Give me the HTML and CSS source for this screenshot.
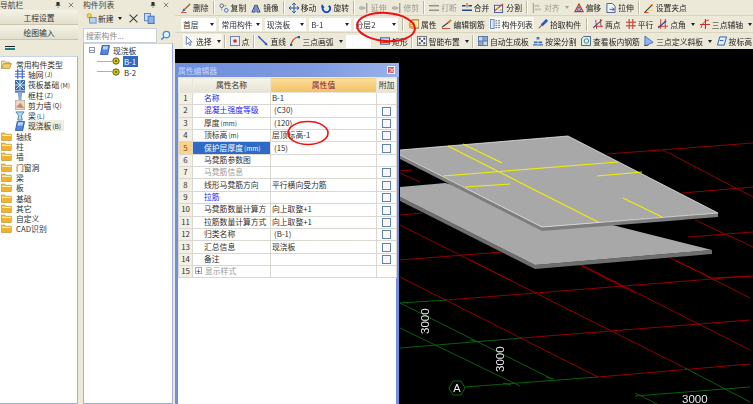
FILE: index.html
```html
<!DOCTYPE html>
<html lang="zh">
<head>
<meta charset="utf-8">
<title>属性编辑器</title>
<link rel="stylesheet" href="styles.css">
</head>
<body>
<svg class="defs" width="0" height="0" aria-hidden="true">
  <symbol id="folder" viewBox="0 0 12 10"><path d="M.5 2.500V1.200h3.600l1 1.300h6.200v7H.5z" fill="#f5c84a" stroke="#a8842c" stroke-width=".7"/><path d="M1 4h10v5H1z" fill="#f0b030"/><path d="M1 3.200h10v1.200H1z" fill="#fff0b0"/></symbol>
  <symbol id="folderopen" viewBox="0 0 12 10"><path d="M.5 9.500V1.200h3.600l1 1.300h4.400V4" fill="#f8e8b0" stroke="#a08030" stroke-width=".7"/><path d="M.5 9.500l2-5.500h9l-2 5.500z" fill="#f2c860" stroke="#a08030" stroke-width=".7"/></symbol>
  <symbol id="grid" viewBox="0 0 11 11"><path d="M0 2.500h11M0 5.500h11M0 8.500h11M3 0v11M8 0v11" stroke="#3a62c8" stroke-width="1.200"/></symbol>
  <symbol id="raft" viewBox="0 0 11 11"><rect width="11" height="11" fill="#3a6ea8"/><path d="M1 1l9 9M10 1l-9 9M5.500 0v11M0 5.500h11" stroke="#d8e8f8"/></symbol>
  <symbol id="col" viewBox="0 0 11 11"><path d="M0 .5h11V3H0z" fill="#5878b8"/><path d="M3 3h5l-1 8H4z" fill="#8aa8d8"/></symbol>
  <symbol id="wall" viewBox="0 0 11 11"><rect width="11" height="11" fill="#e8d8c8" stroke="#a89888"/><path d="M1 8l5-5 4 6z" fill="#c88868"/></symbol>
  <symbol id="beam" viewBox="0 0 11 11"><path d="M1 1h9L7 5l1 5H3l1-5z" fill="#b8d8f0" stroke="#4878b8"/></symbol>
  <symbol id="slab" viewBox="0 0 11 11"><path d="M2.500 .5h8l-2 10H.5z" fill="#5088e0" stroke="#1c4098" stroke-width=".8"/><path d="M3.500 1.500H9L8 5H3z" fill="#b8d4f8"/></symbol>
  <symbol id="node" viewBox="0 0 9 9"><circle cx="4.500" cy="4.500" r="3.600" fill="#d8c820" stroke="#505010"/><circle cx="4.500" cy="4.500" r="1.300" fill="#706810"/></symbol>
  <symbol id="broom" viewBox="0 0 11 11"><path d="M10 1L4 7" stroke="#9a5a20" stroke-width="1.500"/><path d="M1 10l2-4 2 2z" fill="#3848b0"/><path d="M0 10.500h6" stroke="#d04040"/></symbol>
  <symbol id="copy" viewBox="0 0 11 11"><circle cx="3" cy="3" r="2" fill="none" stroke="#506080"/><circle cx="8" cy="8" r="2" fill="none" stroke="#3868c8"/><path d="M5 3h4M3 5v4" stroke="#506080" stroke-dasharray="1 1"/></symbol>
  <symbol id="mirror" viewBox="0 0 11 11"><path d="M4.500 2L1 10h3.500zM6.500 2L10 10H6.500z" fill="#9ab4e0" stroke="#284890"/></symbol>
  <symbol id="move" viewBox="0 0 11 11"><path d="M5.500 0v11M0 5.500h11M3.500 2l2-2 2 2M3.500 9l2 2 2-2M2 3.500l-2 2 2 2M9 3.500l2 2-2 2" stroke="#2858a8" fill="none" stroke-width="1.100"/></symbol>
  <symbol id="rotate" viewBox="0 0 11 11"><path d="M8.500 3a4 4 0 1 1-6 1" stroke="#1848c0" stroke-width="2" fill="none"/><path d="M1 1l3 4H0z" fill="#1848c0"/></symbol>
  <symbol id="ext" viewBox="0 0 11 11"><path d="M0 5.500h7M8.500 0v11" stroke="#a0a098" stroke-width="1.500"/><path d="M1 3.500h4v4H1z" fill="#b8b8b0"/></symbol>
  <symbol id="break" viewBox="0 0 11 11"><path d="M0 3h11M0 8h11" stroke="#909088" stroke-width="1.500"/><path d="M5.500 1v3M5.500 7v3" stroke="#c0c0b8"/></symbol>
  <symbol id="merge" viewBox="0 0 11 11"><path d="M0 3h4M7 3h4M0 8h11" stroke="#1c4898" stroke-width="1.500"/><path d="M5.500 0v5" stroke="#c04020"/></symbol>
  <symbol id="split" viewBox="0 0 11 11"><rect x=".5" y="2.500" width="9" height="8" fill="#e8ecf8" stroke="#3858a8"/><path d="M0 9L10 1" stroke="#d03820" stroke-width="1.300"/><path d="M2 6h3M6 8h3" stroke="#e0a020"/></symbol>
  <symbol id="align" viewBox="0 0 11 11"><path d="M1.500 0v11" stroke="#909088"/><path d="M3 2h5v2H3zM3 6h7v2H3z" fill="#c0c0b8"/></symbol>
  <symbol id="offset" viewBox="0 0 11 11"><path d="M5.500 1L10 9.500H1z" fill="none" stroke="#c03828" stroke-width="1.300"/><path d="M5.500 4l2 4h-4z" fill="none" stroke="#3858a8"/></symbol>
  <symbol id="stretch" viewBox="0 0 11 11"><path d="M1 .5h6l3 3v7H1z" fill="#eef2fa" stroke="#405888"/><path d="M4 7h5M7 5l2 2-2 2" stroke="#2858a8" fill="none"/></symbol>
  <symbol id="grip" viewBox="0 0 11 11"><path d="M1 10l8-8" stroke="#404040" stroke-width="1.300"/><path d="M7 1h3v3z" fill="#e8a020"/><path d="M0 10.500h5" stroke="#d03820"/><path d="M5 8h5" stroke="#e0c020" stroke-dasharray="1 1"/></symbol>
  <symbol id="prop" viewBox="0 0 11 11"><rect x="3" y="1" width="8" height="9" fill="#f8e8b0" stroke="#806020"/><path d="M0 3h6v7H0z" fill="#e8a040"/><path d="M2 5h3M2 7h3" stroke="#fff"/></symbol>
  <symbol id="rebar" viewBox="0 0 11 11"><path d="M0 9l8-6" stroke="#404040" stroke-width="1.300"/><path d="M7 4l3-3" stroke="#d08020" stroke-width="2"/><path d="M0 10.500h9" stroke="#d03820"/></symbol>
  <symbol id="list" viewBox="0 0 11 11"><rect x=".5" y=".5" width="4" height="10" fill="#dce8f8" stroke="#6888b8"/><path d="M6 2h5M6 4.500h5M6 7h5M6 9.500h5" stroke="#506888" stroke-dasharray="2 1"/></symbol>
  <symbol id="pick" viewBox="0 0 11 11"><path d="M10 1L4 7" stroke="#2858c8" stroke-width="3"/><path d="M4 7l-3 3" stroke="#d04030" stroke-width="1.300"/></symbol>
  <symbol id="two" viewBox="0 0 11 11"><path d="M1 8h10M3 1l1 10M8 0l1 9" stroke="#c83028"/><path d="M0 10l10-9" stroke="#3858a8" stroke-width="1.200"/></symbol>
  <symbol id="para" viewBox="0 0 11 11"><path d="M0 3.500h11M0 7.500h11M3.500 0v11M7.500 0v11" stroke="#c83028" stroke-width="1.100"/></symbol>
  <symbol id="angle" viewBox="0 0 11 11"><path d="M0 8h11M3 0v11M8 0v11" stroke="#c83028"/><path d="M0 10L9 2" stroke="#2848a8" stroke-width="1.400"/></symbol>
  <symbol id="axis" viewBox="0 0 11 11"><path d="M0 6h11M6 0v11" stroke="#c83028" stroke-width="1.200"/><path d="M1 10Q3 2 10 1" stroke="#c83028" fill="none"/></symbol>
  <symbol id="cursor" viewBox="0 0 11 11"><path d="M2.500 .5v9l2.200-2.200 1.600 3.200 1.400-.8L6 6.600h3z" fill="#fff" stroke="#3858a8" stroke-width=".8"/></symbol>
  <symbol id="point" viewBox="0 0 11 11"><rect x=".5" y=".5" width="10" height="10" fill="#e8ecf8" stroke="#6878a8"/><circle cx="5.500" cy="5.500" r="2" fill="#c83028"/></symbol>
  <symbol id="line" viewBox="0 0 11 11"><path d="M0 0l10 10" stroke="#2858a8" stroke-width="1.500"/><path d="M10.500 10.500L7 9l2-2z" fill="#2858a8"/></symbol>
  <symbol id="arc" viewBox="0 0 11 11"><path d="M1 11Q2 2 10 1" stroke="#d85020" stroke-width="1.500" fill="none"/><rect y="8.500" width="2.500" height="2.500" fill="#2858a8"/><rect x="8.500" width="2.500" height="2.500" fill="#2858a8"/></symbol>
  <symbol id="rect" viewBox="0 0 11 11"><rect x=".5" y="2" width="10" height="7" fill="#c8d8f4" stroke="#2858a8"/><path d="M0 7h11" stroke="#d03820" stroke-width="1.300"/></symbol>
  <symbol id="smart" viewBox="0 0 11 11"><rect x=".5" y=".5" width="10" height="10" fill="#f4f4f0" stroke="#707070"/><path d="M2 2h2v2H2zM7 2h2v2H7zM2 7h2v2H2zM7 7h2v2H7zM4.500 4.500h2v2h-2z" fill="#304878"/></symbol>
  <symbol id="auto" viewBox="0 0 11 11"><rect width="11" height="11" fill="#5878a8"/><path d="M1 1h4v4H1zM6 6h4v4H6z" fill="#c8d8ec"/><path d="M6 1h4v4H6zM1 6h4v4H1z" fill="#88a8d0"/></symbol>
  <symbol id="beamsplit" viewBox="0 0 11 11"><path d="M4 1h3v3H4zM1 6h9v2H1zM0 9h11v1.500H0z" fill="#3868c0"/><path d="M5.500 3v7" stroke="#d8e8f8"/></symbol>
  <symbol id="view" viewBox="0 0 11 11"><path d="M3 .5h7.500v10H.5V3z" fill="#e0ecf8" stroke="#385888"/><circle cx="6" cy="5.500" r="2.500" fill="none" stroke="#308858"/></symbol>
  <symbol id="tri" viewBox="0 0 11 11"><path d="M1 0v11l9-4z" fill="#90b8f0" stroke="#2850a8" stroke-width=".8"/><path d="M0 11h5" stroke="#202020"/></symbol>
  <symbol id="height" viewBox="0 0 11 11"><path d="M3 1h7.500L8 10H.5z" fill="#e0ecf8" stroke="#2858a8"/><path d="M3 5h4" stroke="#2858a8"/></symbol>
  <symbol id="newdoc" viewBox="0 0 12 12"><circle cx="3.500" cy="3" r="2.500" fill="#f0d040" stroke="#a08820" stroke-width=".6"/><rect x="4" y="5" width="7" height="6" fill="#b8d0f0" stroke="#4878b8" stroke-width=".8"/></symbol>
  <symbol id="copydoc" viewBox="0 0 12 12"><rect x=".5" y=".5" width="6.500" height="8" fill="#c8dcf4" stroke="#5080c0"/><rect x="4.500" y="3.500" width="6.500" height="8" fill="#8ab0e8" stroke="#4070b8"/></symbol>
  <symbol id="pin" viewBox="0 0 7 7"><path d="M2 0h3v3l1 1H1l1-1zM3.500 4v3" fill="#303030" stroke="#303030" stroke-width=".5"/></symbol>
  <symbol id="x" viewBox="0 0 7 7"><path d="M1 1l5 5M6 1L1 6" stroke="#404040" stroke-width=".7"/></symbol>
</svg>

<div class="app">
  <aside class="panel nav">
    <div class="ptitle"><span>导航栏</span><span class="pbtns"><svg class="ps"><use href="#pin"/></svg><svg class="ps"><use href="#x"/></svg></span></div>
    <button class="navbtn">工程设置</button>
    <button class="navbtn">绘图输入</button>
    <div class="navtools"><span class="dash"></span></div>
    <div class="treebox navtree">
      <div class="tr"><svg class="fo"><use href="#folderopen"/></svg>常用构件类型</div>
      <div class="tr sub"><svg class="ti"><use href="#grid"/></svg>轴网<small class="u">(J)</small></div>
      <div class="tr sub"><svg class="ti"><use href="#raft"/></svg>筏板基础<small class="u">(M)</small></div>
      <div class="tr sub"><svg class="ti"><use href="#col"/></svg>框柱<small class="u">(Z)</small></div>
      <div class="tr sub"><svg class="ti"><use href="#wall"/></svg>剪力墙<small class="u">(Q)</small></div>
      <div class="tr sub"><svg class="ti"><use href="#beam"/></svg>梁<small class="u">(L)</small></div>
      <div class="tr sub"><svg class="ti"><use href="#slab"/></svg><span class="cursel">现浇板<small class="u">(B)</small></span></div>
      <div class="tr"><svg class="fo"><use href="#folder"/></svg>轴线</div>
      <div class="tr"><svg class="fo"><use href="#folder"/></svg>柱</div>
      <div class="tr"><svg class="fo"><use href="#folder"/></svg>墙</div>
      <div class="tr"><svg class="fo"><use href="#folder"/></svg>门窗洞</div>
      <div class="tr"><svg class="fo"><use href="#folder"/></svg>梁</div>
      <div class="tr"><svg class="fo"><use href="#folder"/></svg>板</div>
      <div class="tr"><svg class="fo"><use href="#folder"/></svg>基础</div>
      <div class="tr"><svg class="fo"><use href="#folder"/></svg>其它</div>
      <div class="tr"><svg class="fo"><use href="#folder"/></svg>自定义</div>
      <div class="tr"><svg class="fo"><use href="#folder"/></svg>CAD识别</div>
    </div>
  </aside>

  <aside class="panel comp">
    <div class="ptitle"><span>构件列表</span><span class="pbtns"><svg class="ps"><use href="#pin"/></svg><svg class="ps"><use href="#x"/></svg></span></div>
    <div class="comptools">
      <svg class="ic12"><use href="#newdoc"/></svg><span>新建</span><i class="drop"></i>
      <svg class="ic12 gapx"><use href="#x"/></svg>
      <svg class="ic12 gapl"><use href="#copydoc"/></svg>
    </div>
    <div class="search"><div class="sfield">搜索构件...</div><svg class="ic12" viewBox="0 0 12 12"><circle cx="7" cy="5" r="3.500" fill="#e8f4ff" stroke="#3890e0" stroke-width="1.400"/><path d="M4.500 7.500l-3 3" stroke="#3890e0" stroke-width="1.800"/></svg></div>
    <div class="treebox comptree">
      <div class="ctr"><span class="minus"></span><svg class="ti"><use href="#slab"/></svg>现浇板</div>
      <div class="ctr leaf"><svg class="nd"><use href="#node"/></svg><span class="sel">B-1</span></div>
      <div class="ctr leaf"><svg class="nd"><use href="#node"/></svg><span>B-2</span></div>
    </div>
  </aside>

  <main class="main">
    <div class="bar bar1">
      <div class="t"><svg><use href="#broom"/></svg>删除</div><i class="sep"></i>
      <div class="t"><svg><use href="#copy"/></svg>复制</div>
      <div class="t"><svg><use href="#mirror"/></svg>镜像</div><i class="sep"></i>
      <div class="t"><svg><use href="#move"/></svg>移动</div>
      <div class="t"><svg><use href="#rotate"/></svg>旋转</div><i class="sep"></i>
      <div class="t off"><svg><use href="#ext"/></svg>延伸</div>
      <div class="t off"><svg><use href="#ext"/></svg>修剪</div><i class="sep"></i>
      <div class="t off"><svg><use href="#break"/></svg>打断</div>
      <div class="t"><svg><use href="#merge"/></svg>合并</div>
      <div class="t"><svg><use href="#split"/></svg>分割</div><i class="sep"></i>
      <div class="t off"><svg><use href="#align"/></svg>对齐<i class="drop lite"></i></div>
      <div class="t"><svg><use href="#offset"/></svg>偏移</div>
      <div class="t"><svg><use href="#stretch"/></svg>拉伸</div><i class="sep"></i>
      <div class="t"><svg><use href="#grip"/></svg>设置夹点</div>
    </div>
    <div class="bar bar2">
      <div class="combo w36">首层<i class="drop"></i></div>
      <div class="combo w43">常用构件<i class="drop"></i></div>
      <div class="combo w42">现浇板<i class="drop"></i></div>
      <div class="combo w42">B-1<i class="drop"></i></div>
      <div class="combo w45">分层2<i class="drop"></i></div><i class="sep sepw"></i>
      <div class="t"><svg><use href="#prop"/></svg>属性</div>
      <div class="t"><svg><use href="#rebar"/></svg>编辑钢筋</div>
      <div class="t on"><svg><use href="#list"/></svg>构件列表</div>
      <div class="t"><svg><use href="#pick"/></svg>拾取构件</div><i class="sep sepw"></i>
      <div class="t"><svg><use href="#two"/></svg>两点</div>
      <div class="t"><svg><use href="#para"/></svg>平行</div>
      <div class="t"><svg><use href="#angle"/></svg>点角<i class="drop"></i></div>
      <div class="t"><svg><use href="#axis"/></svg>三点辅轴<i class="drop"></i></div>
    </div>
    <div class="bar bar3">
      <div class="t on"><svg><use href="#cursor"/></svg>选择<i class="drop"></i></div><i class="sep"></i>
      <div class="t"><svg><use href="#point"/></svg>点</div><i class="sep"></i>
      <div class="t"><svg><use href="#line"/></svg>直线</div>
      <div class="t"><svg><use href="#arc"/></svg>三点画弧<i class="drop"></i></div>
      <div class="blank"></div>
      <div class="t"><svg><use href="#rect"/></svg>矩形</div><i class="sep"></i>
      <div class="t"><svg><use href="#smart"/></svg>智能布置<i class="drop"></i></div><i class="sep"></i>
      <div class="t"><svg><use href="#auto"/></svg>自动生成板</div>
      <div class="t"><svg><use href="#beamsplit"/></svg>按梁分割</div>
      <div class="t"><svg><use href="#view"/></svg>查看板内钢筋</div>
      <div class="t"><svg><use href="#tri"/></svg>三点定义斜板<i class="drop"></i></div>
      <div class="t"><svg><use href="#height"/></svg>按标高</div>
    </div>

    <div class="view">
      <svg class="scene" viewBox="175 49 578 355" preserveAspectRatio="none">
        <g fill="none" stroke="#a00000" stroke-width=".9">
          <path d="M607 154L753 143M663 150L753 197M682 193L753 187M400 171L412 170M400 173L420 182M400 215L422 213M400 225L510 280M400 260L528 250M688 237L753 232M695 220L753 247M670 258L712 278M712 278L753 276M580 265L635 293"/>
          <path d="M400 277L598 377M470 260L685 368M582 265L750 350M675 260L750 298M447 300L750 276M522 338L750 320M598 377L750 364"/>
        </g>
        <g fill="none" stroke="#0a6a0a" stroke-width=".9">
          <path d="M400 303L447 300M400 348L522 338M465 387L598 377M400 303L552 379M400 328L520 386M685 368L750 402M635 396L750 387M635 393L657 404"/>
          <path d="M403 302l5 1M470 340l8 2M546 377l8 2M503 383l8 2"/>
        </g>
        <polygon points="400,197 400,201 535,269 712,254 712,250 535,265" fill="#6e6e6e"/>
        <polygon points="400,187 445,183 712,250 535,265 400,197" fill="#a8a8a8"/>
        <polygon points="400,155 400,159 542,231 718,217 718,213 542,227" fill="#7d7d7d"/>
        <polygon points="400,150 568,136 718,213 542,227 400,155" fill="#a8a8a8"/>
        <path d="M400 150L568 136M568 136L718 213M718 213L542 227L400 155" fill="none" stroke="#e4e4e4" stroke-width=".8"/>
        <g stroke="#f0f000" stroke-width="1.200" fill="none">
          <path d="M448 146L598 222M463 144L502 163M443 176L618 162M465 187L510 184M597 176L642 172M623 198L662 217"/>
        </g>
        <g fill="#e8e8e8" font-family="'Liberation Sans', sans-serif" font-size="11.500">
          <text transform="translate(429 334) rotate(-90)">3000</text>
          <text transform="translate(504 372) rotate(-90)">3000</text>
          <text x="682" y="403">3000</text>
        </g>
        <polygon points="453,381 461,381 465,388 461,395 453,395 449,388" fill="#000" stroke="#0a6a0a"/>
        <text x="457" y="392" fill="#f0f0f0" font-size="11" text-anchor="middle" font-family="'Liberation Sans', sans-serif">A</text>
      </svg>
    </div>

    <section class="prop">
      <div class="ptt"><span>属性编辑器</span><span class="pclose">×</span></div>
      <table class="ptab">
        <colgroup><col class="c0"><col class="c1"><col class="c2"><col class="c3"></colgroup>
        <thead><tr><th></th><th>属性名称</th><th class="thv">属性值</th><th>附加</th></tr></thead>
        <tbody>
          <tr><td class="n">1</td><td class="k blue">名称</td><td class="v">B-1</td><td></td></tr>
          <tr><td class="n">2</td><td class="k blue">混凝土强度等级</td><td class="v i">(C30)</td><td class="c"><i class="cb"></i></td></tr>
          <tr><td class="n">3</td><td class="k">厚度<small class="u">(mm)</small></td><td class="v i">(120)</td><td class="c"><i class="cb"></i></td></tr>
          <tr><td class="n">4</td><td class="k">顶标高<small class="u">(m)</small></td><td class="v">层顶标高-1</td><td class="c"><i class="cb"></i></td></tr>
          <tr class="cur"><td class="n">5</td><td class="k">保护层厚度<small class="u">(mm)</small></td><td class="v i">(15)</td><td class="c"><i class="cb"></i></td></tr>
          <tr><td class="n">6</td><td class="k">马凳筋参数图</td><td class="v"></td><td></td></tr>
          <tr><td class="n">7</td><td class="k grey">马凳筋信息</td><td class="v"></td><td class="c"><i class="cb"></i></td></tr>
          <tr><td class="n">8</td><td class="k">线形马凳筋方向</td><td class="v">平行横向受力筋</td><td class="c"><i class="cb"></i></td></tr>
          <tr><td class="n">9</td><td class="k blue">拉筋</td><td class="v"></td><td class="c"><i class="cb"></i></td></tr>
          <tr><td class="n">10</td><td class="k">马凳筋数量计算方</td><td class="v">向上取整+1</td><td class="c"><i class="cb"></i></td></tr>
          <tr><td class="n">11</td><td class="k">拉筋数量计算方式</td><td class="v">向上取整+1</td><td class="c"><i class="cb"></i></td></tr>
          <tr><td class="n">12</td><td class="k">归类名称</td><td class="v i">(B-1)</td><td class="c"><i class="cb"></i></td></tr>
          <tr><td class="n">13</td><td class="k">汇总信息</td><td class="v">现浇板</td><td class="c"><i class="cb"></i></td></tr>
          <tr><td class="n">14</td><td class="k">备注</td><td class="v"></td><td class="c"><i class="cb"></i></td></tr>
          <tr><td class="n">15</td><td class="k grey ex"><i class="plus">+</i>显示样式</td><td class="v"></td><td></td></tr>
        </tbody>
      </table>
    </section>

    <svg class="marks" viewBox="175 0 578 404" preserveAspectRatio="none">
      <ellipse class="m1" cx="386" cy="27" rx="29" ry="14" transform="rotate(4 386 27)"/>
      <ellipse cx="308" cy="133" rx="20" ry="11.500"/>
    </svg>
  </main>
</div>
</body>
</html>
```

FILE: styles.css
```css
* { box-sizing: border-box; }
html, body { margin: 0; padding: 0; background: #ece9d8; }
body { font-family: "Noto Sans CJK SC", "Liberation Sans", sans-serif; font-size: 7.800px; color: #303030; }
.defs { position: absolute; }
i { font-style: normal; }
small.u { font-size: 6.500px; margin-left: 1px; }
.app { display: flex; width: 753px; height: 404px; overflow: hidden; filter: blur(.3px); }

.panel { display: flex; flex-direction: column; height: 404px; background: #ece9d8; flex: none; }
.nav { width: 82px; padding-right: 4px; }
.comp { width: 93px; padding: 0 2px 0 1px; }
.ptitle { display: flex; justify-content: space-between; align-items: center; height: 10px; line-height: 10px; color: #444; }
.pbtns { display: flex; gap: 7px; margin-right: 4px; }
.ps { width: 6px; height: 6px; }
.navbtn { display: block; height: 15px; margin: 0; padding: 0; font: inherit; color: #333; width: 100%; border: 0; border-bottom: 1px solid #c8c4b0; background: linear-gradient(#f4f2e6, #e2dfcc); }
.navtools { height: 16px; display: flex; align-items: center; padding-left: 5px; }
.dash { display: block; width: 10px; height: 4px; border-top: 1px solid #222; border-bottom: 2px solid #208080; }
.treebox { flex: 1; background: #fff; border: 1px solid #9db2d6; border-top-color: #c8d4e8; }
.navtree { padding: 2px 0 0 1px; border-left: 0; }
.tr { display: flex; align-items: center; height: 10.300px; white-space: nowrap; }
.tr.sub { padding-left: 14px; }
.fo { width: 11px; height: 9px; margin-right: 4px; flex: none; }
.ti { width: 10px; height: 10px; margin-right: 3px; flex: none; }
.cursel { background: #f0ede0; padding-right: 3px; }

.comptools { display: flex; align-items: center; height: 17px; padding-left: 3px; gap: 1px; }
.ic12 { width: 11px; height: 11px; flex: none; }
.gapx { margin-left: 5px; }
.gapl { margin-left: 4px; }
.search { display: flex; align-items: center; height: 16px; gap: 3px; }
.sfield { width: 74px; height: 15px; background: #fff; border: 1px solid #c8d0dc; color: #8a8a8a; padding-left: 2px; line-height: 13px; }
.comptree { padding: 1px 0 0 5px; }
.ctr { display: flex; align-items: center; height: 10.800px; white-space: nowrap; }
.minus { width: 6px; height: 6px; border: 1px solid #8898b0; margin-right: 5px; background: linear-gradient(#8898b0, #8898b0) center / 4px 1px no-repeat #fff; }
.leaf { padding-left: 23px; background: linear-gradient(#b0b0b0, #b0b0b0) 8px 50% / 15px 1px no-repeat; }
.nd { width: 8px; height: 8px; margin-right: 3px; }
.sel { background: #316ac5; color: #fff; padding: 0 2px 0 1px; }
.leaf span:not(.sel) { padding-left: 1px; }

.main { position: relative; flex: 1; display: flex; flex-direction: column; min-width: 0; }
.bar { display: flex; align-items: center; white-space: nowrap; background: #ece9d8; border-bottom: 1px solid #d8d4c0; }
.bar1 { height: 16px; padding-left: 5px; gap: 3px; }
.bar2 { height: 17px; padding-left: 6px; gap: 3px; }
.bar3 { height: 16px; padding-left: 8px; gap: 2.500px; border-bottom: 0; }
.t { display: flex; align-items: center; height: 14px; padding: 0 1px; gap: 2px; color: #1e1e1e; }
.t svg { width: 10px; height: 10px; flex: none; }
.t.off { color: #9a9a90; }
.t.on { background: #f8f7f0; }
.sep { display: block; width: 2px; height: 13px; background: #bcb8a4; border-right: 1px solid #fff; flex: none; }
.sepw { margin: 0 1px; }
.combo { position: relative; display: flex; align-items: center; height: 13px; padding-left: 2px; background: #fff; }
.combo .drop { position: absolute; right: 2px; top: 5px; margin: 0; }
.w36 { width: 36px; } .w42 { width: 42px; } .w43 { width: 43px; } .w45 { width: 45px; }
.drop { display: inline-block; width: 0; height: 0; margin-left: 3px; border: 2px solid transparent; border-top: 3px solid #222; border-bottom: 0; flex: none; }
.drop.lite { border-top-color: #a0a098; }
.blank { width: 30px; height: 13px; background: #fff; margin: 0 6px 0 0; }

.view { flex: 1; position: relative; background: #000; min-height: 0; }
.scene { position: absolute; left: 0; top: 0; width: 100%; height: 100%; display: block; }

.prop { position: absolute; left: 0; top: 63px; width: 224px; height: 341px; background: #fff; border: 3px solid #6f8fdc; border-top: 0; border-bottom: 0; }
.ptt { display: flex; justify-content: space-between; align-items: center; height: 14px; margin: 0 -3px; padding: 0 4px 0 3px; background: linear-gradient(90deg, #6f8fdc, #7e9ae0 60%, #98b2ea); color: #c8d6f6; }
.pclose { width: 8px; height: 8px; background: #d05a6a; color: #fff; border: 1px solid #eee; line-height: 5px; font-size: 8px; text-align: center; }
.ptab { border-collapse: collapse; table-layout: fixed; width: 218px; }
.c0 { width: 14px; } .c1 { width: 78px; } .c2 { width: 106px; } .c3 { width: 20px; }
.ptab th { height: 15px; font-weight: 400; padding: 0 0 2px; background: linear-gradient(#f6f5ec, #e6e3d2); border: 1px solid #e8e6da; }
.ptab th.thv { background: linear-gradient(#fbdf9c, #f4c064); color: #7a1848; }
.ptab td { height: 12.300px; padding: 0 0 1px; line-height: 10px; border: 1px solid #d8d8d0; overflow: hidden; white-space: nowrap; }
.n { text-align: center; background: #f2f0e4; }
.ptab td.k { padding-left: 11px; }
.ptab td.v { padding-left: 1px; }
.ptab td.i { padding-left: 3px; }
.c { text-align: center; }
.blue { color: #1428f0; }
.grey { color: #999; }
.cur .n { background: #fbd28a; color: #a04000; }
.cur .k { background: #316ac5; color: #fff; }
.cb { display: inline-block; width: 9px; height: 9px; vertical-align: middle; border: 1px solid #5f84a8; background: #f6f8fb; }
.ptab td.ex { padding-left: 2px; }
.plus { display: inline-block; width: 7px; height: 7px; line-height: 5px; border: 1px solid #aaa; color: #222; text-align: center; margin-right: 3px; background: #fff; }

.marks { position: absolute; left: 0; top: 0; width: 578px; height: 404px; pointer-events: none; }
.marks ellipse { fill: none; stroke: #f01010; stroke-width: 1.600; }
.marks .m1 { stroke-width: 2; }
```
